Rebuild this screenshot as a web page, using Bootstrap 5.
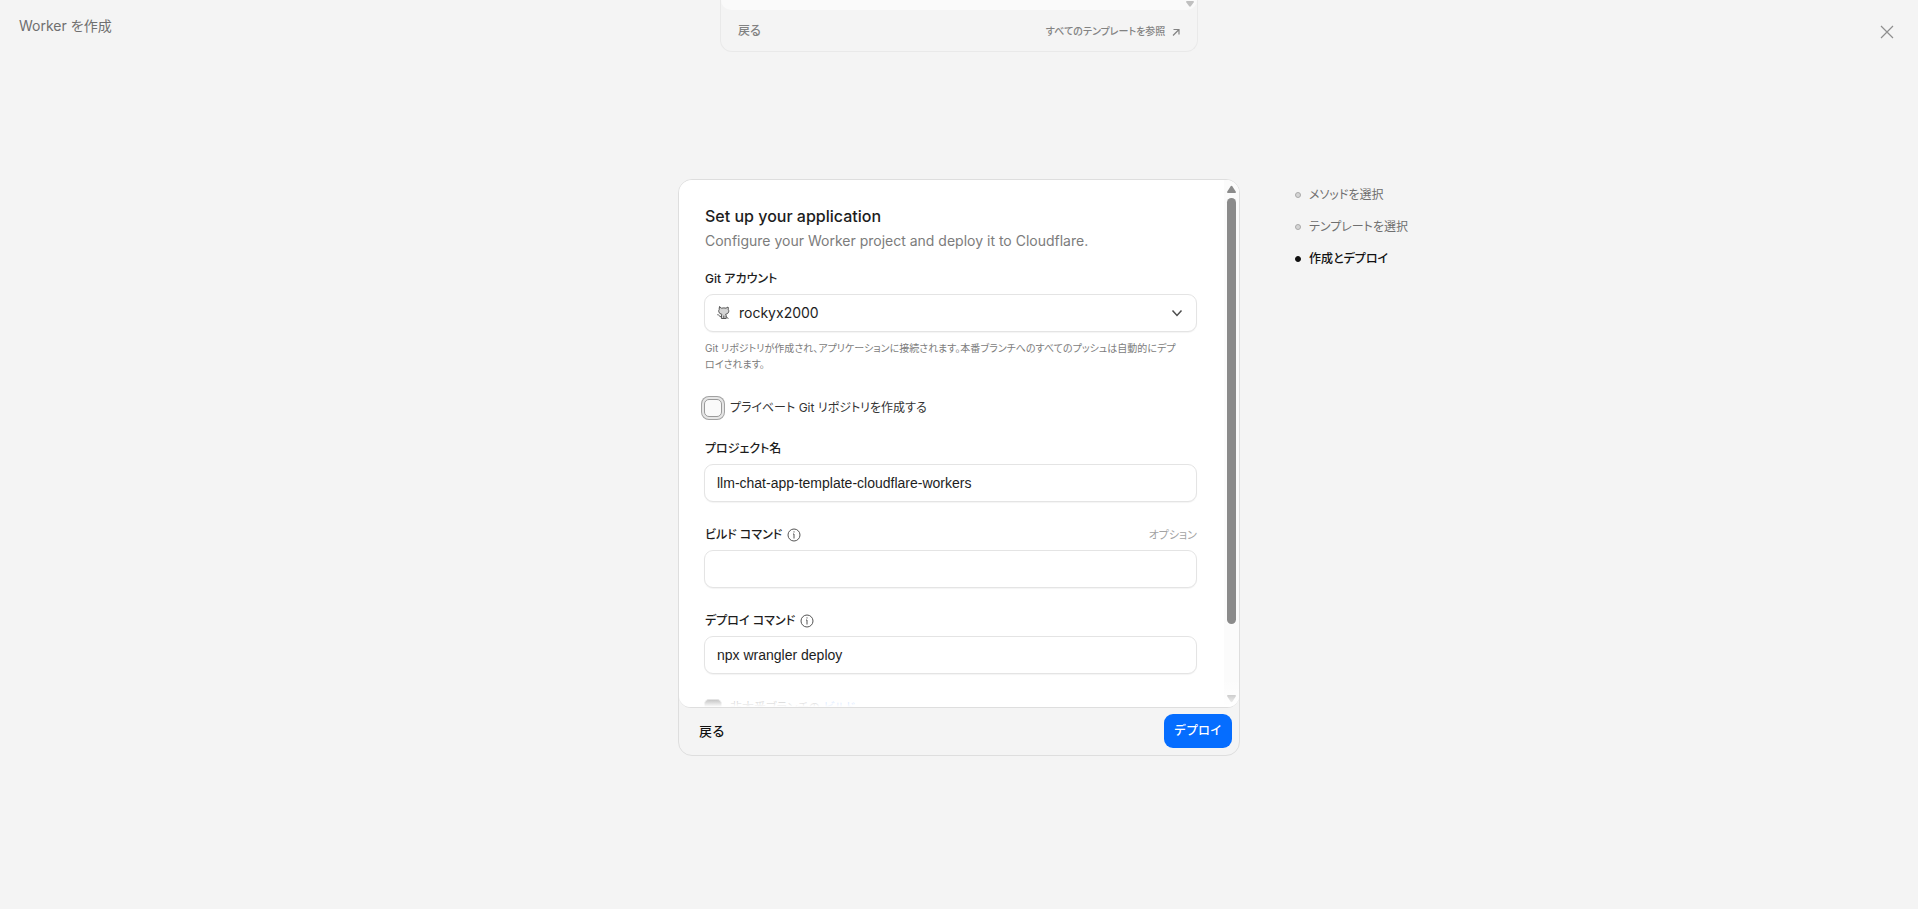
<!DOCTYPE html>
<html lang="ja">
<head>
<meta charset="utf-8">
<meta name="viewport" content="width=device-width, initial-scale=1">
<title>Worker を作成</title>
<link rel="stylesheet" href="https://cdn.jsdelivr.net/npm/bootstrap@5.3.0/dist/css/bootstrap.min.css">
<style>
  body {
    background: #f4f4f4;
    color: #1d1d1d;
    font-family: Inter, "Noto Sans CJK JP", sans-serif;
    font-size: 14px;
    line-height: 20px;
    font-feature-settings: "palt";
    min-height: 100vh;
  }
  .page-grid { display: grid; grid-template-columns: 1fr minmax(0, auto) 1fr; }
  .crumb { padding: 16px 19px; color: #6f6f6f; }
  .close-btn { margin: 21px 20px 0 0; padding: 4px; border: 0; background: none; line-height: 0; color: #8f8f8f; }

  .prev-card { width: 478px; border: 1px solid #e9e9e9; border-top: 0; border-radius: 0 0 12px 12px; font-size: 12px; }
  .prev-pane { height: 10px; background: #fafafa; border-radius: 0 0 10px 10px; padding: 1px 3px 0 0; }
  .prev-foot { padding: 11px 17px 10px; }
  .prev-foot a { color: #828282; font-weight: 500; text-decoration: none; }
  .prev-foot .browse { font-size: 10px; }

  .stage { margin-top: 127px; }
  .wizard { width: 562px; border: 1px solid #dedede; border-radius: 14px; }
  .pane { height: 528px; background: #fff; border-bottom: 1px solid #dedede; border-radius: 13px 13px 12px 12px; overflow: hidden; position: relative; }
  .pane-body { padding: 24px 27px 0 25px; }
  .pane-fade { position: absolute; inset: auto 0 0 0; height: 28px; background: linear-gradient(rgba(255,255,255,0), #fff); pointer-events: none; }
  .scroll-track { width: 15px; background: #fbfbfb; padding: 5px 3px 4px; }
  .scroll-thumb { width: 9px; height: 426px; border-radius: 5px; background: #8b8b8b; margin-top: 5px; }

  h1 { font-size: 16px; line-height: 24px; font-weight: 500; margin: 0; padding-left: 1px; }
  .sub { color: #7c7c7c; line-height: 26px; margin: 0 0 15px; padding-left: 1px; }
  .lbl { display: flex; align-items: center; font-size: 12px; font-weight: 500; margin-bottom: 5px; height: 20px; padding-left: 1px; }
  .lbl svg { margin-left: 5px; }
  .ctl { height: 38px; border: 1px solid #e4e4e4; border-radius: 9px; background-color: #fff; color: #1d1d1d; font-size: 14px; padding: 0 12px; box-shadow: 0 1px 1px #f4f4f4; }
  input.ctl { font-family: "Liberation Sans", sans-serif; }
  .field { margin-bottom: 23px; }
  .pick { position: relative; }
  .pick select { appearance: none; padding-left: 34px; }
  .pick svg { position: absolute; top: 12px; pointer-events: none; }
  .pick .cat { left: 13px; }
  .pick .chev { right: 14px; }
  .hint { font-size: 10px; line-height: 16px; color: #7c7c7c; margin: 8px 0 25px; padding: 0 14px 0 1px; }
  .tick { appearance: none; width: 18px; height: 18px; margin: 0; border: 1px solid #9a9a9a; border-radius: 5px; background: #fafafa; flex: none; }
  .tick.ring { box-shadow: 0 0 0 2px #e6e6e6, 0 0 0 3px #a2a2a2; }
  .tick:checked { background: #1d1d1d; }
  .check-row { height: 22px; margin-bottom: 20px; color: #333; font-size: 12px; }
  .opt { color: #a3a3a3; font-weight: 400; font-size: 11px; }

  .foot { height: 47px; padding: 0 7px 1px 20px; }
  .foot .back { border: 0; background: none; padding: 0; color: #111; font-size: 13px; font-weight: 500; }
  .deploy { background: #056dff; border: 0; border-radius: 9px; color: #fff; font-size: 12px; line-height: 20px; font-weight: 500; padding: 7px 10px; }

  .steps { margin: 6px 0 0 55px; padding: 0; list-style: none; display: flex; flex-direction: column; gap: 12px; color: #6f6f6f; font-size: 12px; }
  .steps li { display: flex; align-items: center; gap: 8px; }
  .steps li::before { content: ""; width: 6px; height: 6px; border-radius: 50%; border: 1px solid #aaa; background: #d4d4d4; }
  .steps .now { color: #111; font-weight: 500; }
  .steps .now::before { background: #111; border-color: #111; }
</style>
</head>
<body>
<header class="page-grid align-items-start">
  <div class="crumb">Worker を作成</div>
  <div class="prev-card">
    <div class="prev-pane d-flex justify-content-end">
      <svg width="8" height="7" viewBox="0 0 8 7"><path d="M0 1Q0 0 1 0H7Q8 0 8 1L5 5Q4 6.500 3 5Z" fill="#c0c0c0"/></svg>
    </div>
    <div class="prev-foot d-flex justify-content-between">
      <a href="#">戻る</a>
      <a class="browse" href="#">すべてのテンプレートを参照
        <svg class="ms-1" width="8" height="8" viewBox="0 0 8 8" fill="none" stroke="#828282" stroke-width="1.200"><path d="M1.500 1.500H7V6.500M7 1.500L1 7.500"/></svg>
      </a>
    </div>
  </div>
  <button class="close-btn ms-auto" type="button" aria-label="閉じる">
    <svg width="14" height="14" viewBox="0 0 14 14" fill="none" stroke="currentColor" stroke-width="1.200"><path d="M1 1L13 13M13 1L1 13"/></svg>
  </button>
</header>

<main class="page-grid align-items-start stage">
  <div></div>
  <form class="wizard">
    <div class="pane d-flex">
      <div class="pane-body flex-grow-1">
        <h1>Set up your application</h1>
        <p class="sub">Configure your Worker project and deploy it to Cloudflare.</p>

        <label class="lbl" for="account">Git アカウント</label>
        <div class="pick">
          <select id="account" class="ctl w-100"><option>rockyx2000</option></select>
          <svg class="cat" width="13" height="14" viewBox="0 0 13 14" fill="none" stroke="#555" stroke-linejoin="round" stroke-linecap="round"><path fill="#d4d4d4" d="M2.500 1L4.500 2.200Q7 1.600 9 2.200L11 1Q11.600 2.200 11.200 3.300Q12 4.200 11.700 5.800Q11.200 8 8.600 8.300Q9.300 9 9.200 10.500V12.500H4.400V10Q4.400 9 4.900 8.300Q2.300 8 1.800 5.800Q1.500 4.200 2.300 3.300Q1.900 2.200 2.500 1Z"/><path d="M4.400 10.700Q2.800 11 2 9.500Q1.600 8.700 .700 8.700M9.200 10.500L11 12.500M6.800 10V12.500"/></svg>
          <svg class="chev" width="12" height="14" viewBox="0 0 12 14" fill="none" stroke="#4d4d4d" stroke-width="1.500"><path d="M1.500 4.500L6 9.500L10.500 4.500"/></svg>
        </div>
        <p class="hint">Git リポジトリが作成され、アプリケーションに接続されます。本番ブランチへのすべてのプッシュは自動的にデプロイされます。</p>

        <div class="check-row d-flex align-items-center gap-2">
          <input class="tick ring" type="checkbox" id="private">
          <label for="private">プライベート Git リポジトリを作成する</label>
        </div>

        <div class="field">
          <label class="lbl" for="project">プロジェクト名</label>
          <input class="ctl w-100" id="project" type="text" value="llm-chat-app-template-cloudflare-workers">
        </div>
        <div class="field">
          <label class="lbl" for="build">ビルド コマンド
            <svg width="14" height="14" viewBox="0 0 14 14" fill="none" stroke="#555"><circle cx="7" cy="7" r="6"/><path d="M6 6H7V10.500M7 3.300V4.500"/></svg>
            <span class="opt ms-auto">オプション</span>
          </label>
          <input class="ctl w-100" id="build" type="text">
        </div>
        <div class="field">
          <label class="lbl" for="deploycmd">デプロイ コマンド
            <svg width="14" height="14" viewBox="0 0 14 14" fill="none" stroke="#555"><circle cx="7" cy="7" r="6"/><path d="M6 6H7V10.500M7 3.300V4.500"/></svg>
          </label>
          <input class="ctl w-100" id="deploycmd" type="text" value="npx wrangler deploy">
        </div>
        <div class="check-row d-flex align-items-center gap-2">
          <input class="tick" type="checkbox" id="branches" checked>
          <label for="branches">非本番ブランチの <a href="#" class="text-decoration-none">ビルド</a></label>
        </div>
      </div>
      <div class="scroll-track d-flex flex-column flex-shrink-0" aria-hidden="true">
        <svg width="9" height="8" viewBox="0 0 9 8"><path d="M0 7Q0 8 1 8H8Q9 8 9 7L5.500 1.500Q4.500 0 3.500 1.500Z" fill="#8b8b8b"/></svg>
        <div class="scroll-thumb"></div>
        <svg class="mt-auto" width="9" height="8" viewBox="0 0 9 8"><path d="M0 1Q0 0 1 0H8Q9 0 9 1L5.500 6.500Q4.500 8 3.500 6.500Z" fill="#8b8b8b"/></svg>
      </div>
      <div class="pane-fade"></div>
    </div>
    <div class="foot d-flex align-items-center justify-content-between">
      <button class="back" type="button">戻る</button>
      <button class="deploy" type="button">デプロイ</button>
    </div>
  </form>
  <ol class="steps">
    <li>メソッドを選択</li>
    <li>テンプレートを選択</li>
    <li class="now">作成とデプロイ</li>
  </ol>
</main>
<script src="https://cdn.jsdelivr.net/npm/bootstrap@5.3.0/dist/js/bootstrap.bundle.min.js"></script>
</body>
</html>
